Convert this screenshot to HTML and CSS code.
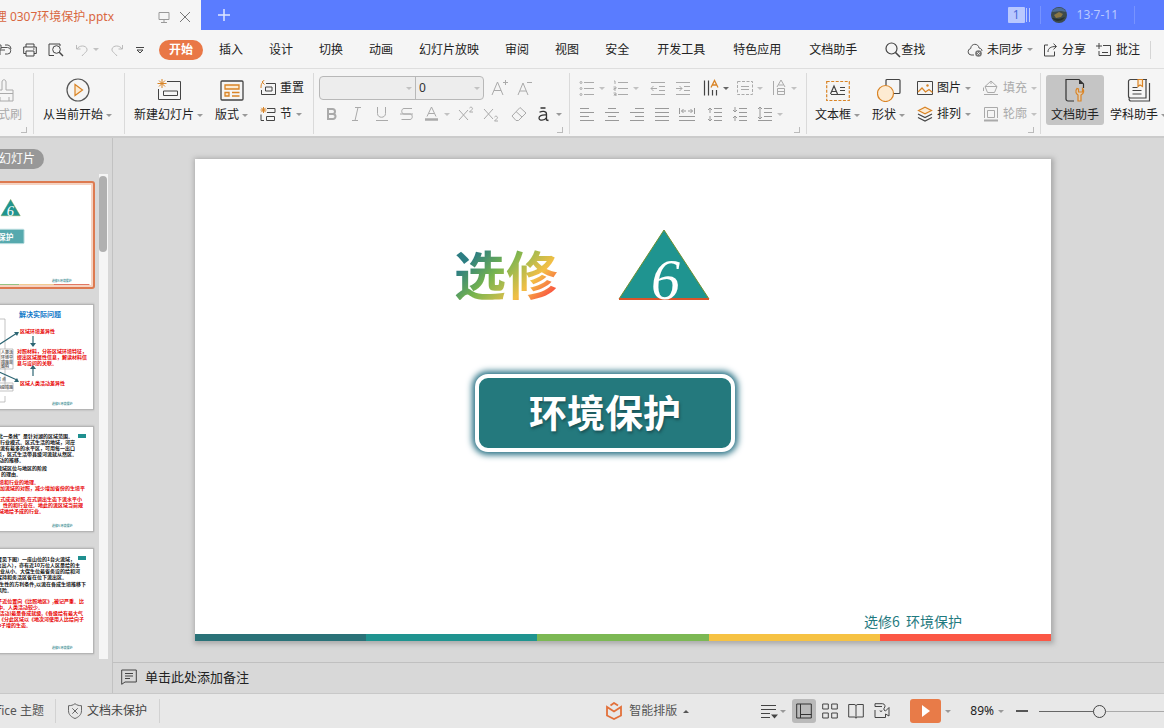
FILE: index.html
```html
<!DOCTYPE html>
<html lang="zh-CN">
<head>
<meta charset="utf-8">
<title>0307环境保护.pptx</title>
<link rel="stylesheet" href="styles.css">
</head>
<body>
<div class="app">

<header class="titlebar">
  <div class="doc-tab">
    <span class="doc-name">理 0307环境保护.pptx</span>
    <button class="bare" aria-label="显示"><svg width="12" height="12" viewBox="0 0 12 12"><path d="M1 1.500h10v7H1zM6 8.500v2.500M3 11.500h6" stroke="#999"/></svg></button>
    <button class="bare" aria-label="关闭"><svg width="12" height="12" viewBox="0 0 12 12"><path d="M1 1l10 10M11 1L1 11" stroke="#777"/></svg></button>
  </div>
  <button class="bare new-tab" aria-label="新建"><svg width="14" height="14" viewBox="0 0 14 14"><path d="M7 1v12M1 7h12" stroke="#dfe6ff" stroke-width="1.500"/></svg></button>
  <div class="account">
    <span class="badge">1</span><span class="badge-bars"></span>
    <span class="account-sep"></span>
    <svg class="avatar" width="16" height="16" viewBox="0 0 16 16"><circle cx="8" cy="8" r="8" fill="#3c4a4c"/><path d="M1 5a8 8 0 0 1 14 0l-5-1z" fill="#4d6c94"/><path d="M3 8l5-3 4 2-2 3-5 1z" fill="#8a7644"/><path d="M1 11l7 1 6-2a8 8 0 0 1-13 1z" fill="#26302f"/></svg>
    <span class="account-name">13·7-11</span>
    <span class="account-sep"></span>
  </div>
</header>

<nav class="menubar">
  <div class="quick">
    <button class="bare" aria-label="导出"><svg width="16" height="14" viewBox="0 0 16 14"><path d="M1 2h4v4H1M4 12V7h5M5 4.500h6.500a3.200 3.200 0 0 1 0 6.500H9M9 2h3a4 4 0 0 1 3 4" stroke="#555"/></svg></button>
    <button class="bare" aria-label="打印"><svg width="14" height="14" viewBox="0 0 14 14"><path d="M3 4V1h8v3M3 10.500H.7V4h12.600v6.500H11M3 8h8v5H3zM10 6h1.500" stroke="#444"/></svg></button>
    <button class="bare" aria-label="打印预览"><svg width="16" height="14" viewBox="0 0 16 14"><path d="M6 12.500H1V1h11v2" stroke="#444"/><circle cx="8.500" cy="6.500" r="3.800" stroke="#444"/><path d="M11.300 9.300L15 13" stroke="#444" stroke-width="1.500"/></svg></button>
    <button class="bare with-caret" aria-label="撤销"><svg width="14" height="14" viewBox="0 0 14 14"><path d="M1.500 2v4h4M2 6c2-4 9-4 10 0 .5 3-3 4-5 7" stroke="#bbb"/></svg><i class="caret faint"></i></button>
    <button class="bare" aria-label="恢复"><svg width="14" height="14" viewBox="0 0 14 14"><path d="M12.500 2v4h-4M12 6c-2-4-9-4-10 0-.5 3 3 4 5 7" stroke="#bbb"/></svg></button>
    <button class="bare quick-more" aria-label="更多"><svg width="8" height="8" viewBox="0 0 8 8"><path d="M0 1.500h8M1 4l3 3 3-3z" stroke="#444"/></svg></button>
  </div>
  <div class="tabs">
    <button class="tab active">开始</button>
    <button class="tab">插入</button>
    <button class="tab">设计</button>
    <button class="tab">切换</button>
    <button class="tab">动画</button>
    <button class="tab">幻灯片放映</button>
    <button class="tab">审阅</button>
    <button class="tab">视图</button>
    <button class="tab">安全</button>
  </div>
  <div class="tabs extra">
    <button class="tab">开发工具</button>
    <button class="tab">特色应用</button>
    <button class="tab">文档助手</button>
    <button class="tab"><svg width="16" height="16" viewBox="0 0 16 16"><circle cx="6.500" cy="6.500" r="5.500" stroke="#444" stroke-width="1.200"/><path d="M10.500 10.500L15 15" stroke="#444" stroke-width="1.600"/></svg>查找</button>
  </div>
  <div class="cloud">
    <button class="tab"><svg width="16" height="14" viewBox="0 0 16 14"><path d="M7 12H4a3.300 3.300 0 0 1-.3-6.500C4 0 11.500 0 12 5c2 .3 3 1.500 3 3" stroke="#555"/><circle cx="11.500" cy="10.500" r="3.300" fill="#777"/><path d="M10.300 9.300l2.400 2.400m0-2.400l-2.400 2.400" stroke="#f5f5f5"/></svg><span>未同步</span><i class="caret"></i></button>
    <button class="tab"><svg width="15" height="14" viewBox="0 0 15 14"><path d="M5 2H1.500v11h10V8.500M5 9c0-4 3-5.500 8-5.500M10.500.7l3 2.800-3 2.800" stroke="#444"/></svg><span>分享</span></button>
    <button class="tab"><svg width="16" height="14" viewBox="0 0 16 14"><path d="M7 2.500h7.500v10H3V8M6 9.500h6M3 0v6M0 3h6" stroke="#444"/></svg><span>批注</span></button>
    <span class="menu-sep"></span>
  </div>
</nav>

<section class="ribbon">
  <div class="group g-clip launch">
    <button class="big off"><svg width="24" height="24" viewBox="0 0 24 24"><path d="M10 12V4c0-3 4-3 4 0v8h7v11H3V12zM3 15.500h18M8 23v-4M17 23v-4" stroke="#aaa"/></svg><span>格式刷</span></button>
  </div>

  <div class="group g-play">
    <button class="big"><svg width="24" height="24" viewBox="0 0 24 24"><circle cx="12" cy="12" r="11" stroke="#555" stroke-width="1.200"/><path d="M9 6.500v11l7.500-5.500z" fill="#fdebd2" stroke="#d98426" stroke-width="1.200"/></svg><span>从当前开始<i class="caret"></i></span></button>
  </div>

  <div class="group g-slide">
    <button class="big"><svg width="24" height="24" viewBox="0 0 24 24"><path d="M10 3.500h13.500v18h-22V11M6.500 13h14v4.500h-14z" stroke="#444"/><path d="M5 1v9M.5 5.500h9M2 2.500l6 6M8 2.500l-6 6" stroke="#d98426"/></svg><span>新建幻灯片<i class="caret"></i></span></button>
    <button class="big"><svg width="24" height="24" viewBox="0 0 24 24"><rect x="1" y="3" width="22" height="19" rx="1" stroke="#444" stroke-width="1.300"/><path d="M5 7h14v4H5zM5 14.500h4v3.500H5zM12 14.500h7.500M12 18h7.500" stroke="#d98426" stroke-width="1.300" fill="#fdebd2"/></svg><span>版式<i class="caret"></i></span></button>
    <div class="stack">
      <button class="small"><svg width="16" height="16" viewBox="0 0 16 16"><path d="M6 3.500h9.500v11h-14V10M5.500 7h6.500v4H5.500z" stroke="#444"/><path d="M4.500 0L2 2l2.500 2.500M2 2.200h1C1.300 3.500 1 5 1 8" stroke="#d98426"/></svg><span>重置</span></button>
      <button class="small"><svg width="16" height="16" viewBox="0 0 16 16"><path d="M7 2.500h8v4H7M1 8.500v6h3M6.500 10.500h8v4h-8z" stroke="#444"/><path d="M3.500 1v6M.5 4h6M1.300 1.800l4.400 4.400m0-4.400L1.300 6.200" stroke="#d98426"/></svg><span>节</span><i class="caret"></i></button>
    </div>
  </div>

  <div class="group g-font launch">
    <div class="stack">
      <div class="row">
        <div class="combos">
          <span class="combo combo-font"><select aria-label="字体"><option></option></select><i class="caret faint"></i></span>
          <span class="combo combo-size"><select aria-label="字号"><option>0</option></select><i class="caret faint"></i></span>
        </div>
        <div class="tools">
          <button class="tool" aria-label="增大字号"><svg width="18" height="18" viewBox="0 0 18 18"><path d="M1 16L6.500 3 12 16M3 11.500h7M12 3.500h5M14.500 1v5" stroke="#aaa"/></svg></button>
          <button class="tool" aria-label="减小字号"><svg width="18" height="18" viewBox="0 0 18 18"><path d="M2 16L7 4l5 12M4 12h6M11 3.500h5" stroke="#aaa"/></svg></button>
        </div>
      </div>
      <div class="row">
        <div class="tools">
          <button class="tool" aria-label="加粗"><svg width="16" height="16" viewBox="0 0 16 16"><path d="M4 3h4.500a2.400 2.400 0 0 1 0 5H4zM4 8h5a2.500 2.500 0 0 1 0 5H4z" stroke="#aaa" stroke-width="2"/></svg></button>
          <button class="tool" aria-label="倾斜"><svg width="16" height="16" viewBox="0 0 16 16"><path d="M6 1.500h6M9 1.500l-3 13M3 14.500h6" stroke="#aaa"/></svg></button>
          <button class="tool" aria-label="下划线"><svg width="16" height="16" viewBox="0 0 16 16"><path d="M3.500 1v6.500c0 5 8 5 8 0V1M2 14.500h12" stroke="#aaa"/></svg></button>
          <button class="tool" aria-label="删除线"><svg width="16" height="16" viewBox="0 0 16 16"><path d="M13 2.500H5C2 2.500 2 8 5 8h6c3 0 3 5.500 0 5.500H2.500M1 8h13" stroke="#aaa"/></svg></button>
          <button class="tool with-caret" aria-label="字体颜色"><svg width="16" height="16" viewBox="0 0 16 16"><path d="M3 10.500L7.500 1 12 10.500M5 7.500h5" stroke="#aaa"/><path d="M1 13.500h13" stroke="#aaa" stroke-width="2.500"/></svg><i class="caret faint"></i></button>
          <button class="tool" aria-label="上标"><svg width="16" height="16" viewBox="0 0 16 16"><path d="M1 4l9 10M10 4L1 14M11.500 2c1.500-2 4 0 2.500 1.500L11.500 6H15" stroke="#aaa"/></svg></button>
          <button class="tool" aria-label="下标"><svg width="16" height="16" viewBox="0 0 16 16"><path d="M1 3l9 10M10 3L1 13M11.500 11c1.500-2 4 0 2.500 1.500l-2.500 2.500H15" stroke="#aaa"/></svg></button>
        </div>
        <div class="tools">
          <button class="tool" aria-label="清除格式"><svg width="16" height="16" viewBox="0 0 16 16"><path d="M9 1.500l6 5.500-7.500 7.500H5L1 10zM5 5.500l6 5.500" stroke="#aaa"/></svg></button>
          <button class="tool with-caret" aria-label="拼音"><svg width="16" height="16" viewBox="0 0 16 16"><path d="M3.500 6.200C6 4.800 10.500 4.800 10.500 8v6.500M10.500 9C5.500 8.700 3 9.700 3 12c0 3 5.500 3 7.500-.5M10.500 14l2 .5M4.500 2h5" stroke="#333" stroke-width="1.300"/></svg><i class="caret"></i></button>
        </div>
      </div>
    </div>
  </div>

  <div class="group g-para launch">
    <div class="stack">
      <div class="row">
        <div class="tools">
          <button class="tool with-caret" aria-label="项目符号"><svg width="16" height="16" viewBox="0 0 16 16"><path d="M5 2.500h10M5 8.500h10M5 14.500h10" stroke="#aaa"/><circle cx="2" cy="2.500" r="1" stroke="#aaa"/><circle cx="2" cy="8.500" r="1" stroke="#aaa"/><circle cx="2" cy="14.500" r="1" stroke="#aaa"/></svg><i class="caret faint"></i></button>
          <button class="tool with-caret" aria-label="编号"><svg width="16" height="16" viewBox="0 0 16 16"><path d="M5 2.500h10M5 8.500h10M5 14.500h10M1 1h1v3M.5 7H3v1.500H1V10h2M.5 13H3v3H.5M1 14.500h2" stroke="#aaa"/></svg><i class="caret faint"></i></button>
        </div>
        <div class="tools">
          <button class="tool" aria-label="减少缩进"><svg width="16" height="16" viewBox="0 0 16 16"><path d="M1 2.500h14M9 6.500h6M9 10.500h6M1 14.500h14M7 8.500H1M3.500 6L1 8.500 3.500 11" stroke="#aaa"/></svg></button>
          <button class="tool" aria-label="增加缩进"><svg width="16" height="16" viewBox="0 0 16 16"><path d="M1 2.500h14M9 6.500h6M9 10.500h6M1 14.500h14M1 8.500h6M4.500 6L7 8.500 4.500 11" stroke="#aaa"/></svg></button>
        </div>
        <div class="tools">
          <button class="tool with-caret" aria-label="文字方向"><svg width="16" height="18" viewBox="0 0 16 18"><path d="M1.500 1.500v15M5.500 1.500v15M9.500 11v5.500M13.500 11v5.500" stroke="#444" stroke-width="1.200"/><path d="M8 8.500l3.500-7L15 8.500M9 6h5" stroke="#d98426" stroke-width="1.300"/></svg><i class="caret dark"></i></button>
          <button class="tool with-caret" aria-label="对齐文本"><svg width="16" height="16" viewBox="0 0 16 16"><path d="M.5 1.500h15v13H.5z" stroke="#aaa" stroke-dasharray="3 1.500"/><path d="M4 6.500h8M4 9.500h8" stroke="#aaa"/></svg><i class="caret faint"></i></button>
          <button class="tool with-caret" aria-label="文本排列"><svg width="16" height="18" viewBox="0 0 16 18"><path d="M2.500 2v14M6 8l4-7 4 7M7.500 6h5M6.500 9.500h7v6h-7zM6.500 12.500h7" stroke="#aaa"/></svg><i class="caret faint"></i></button>
        </div>
      </div>
      <div class="row">
        <div class="tools">
          <button class="tool" aria-label="左对齐"><svg width="16" height="16" viewBox="0 0 16 16"><path d="M1 2.500h9M1 6.500h14M1 10.500h9M1 14.500h14" stroke="#999"/></svg></button>
          <button class="tool" aria-label="居中"><svg width="16" height="16" viewBox="0 0 16 16"><path d="M4 2.500h8M1 6.500h14M4 10.500h8M1 14.500h14" stroke="#999"/></svg></button>
          <button class="tool" aria-label="右对齐"><svg width="16" height="16" viewBox="0 0 16 16"><path d="M6 2.500h9M1 6.500h14M6 10.500h9M1 14.500h14" stroke="#999"/></svg></button>
          <button class="tool" aria-label="两端对齐"><svg width="16" height="16" viewBox="0 0 16 16"><path d="M1 2.500h14M1 6.500h14M1 10.500h14M1 14.500h14" stroke="#999"/></svg></button>
          <button class="tool" aria-label="分散对齐"><svg width="16" height="16" viewBox="0 0 16 16"><path d="M.5 2v6M15.500 2v6M7 5H2.500M13.500 5H9M4.500 3l-2 2 2 2M11.500 3l2 2-2 2M0 10.500h16M0 14.500h16" stroke="#999"/></svg></button>
        </div>
        <div class="tools">
          <button class="tool" aria-label="增大段距"><svg width="16" height="16" viewBox="0 0 16 16"><path d="M7 2.500h8M7 6.500h8M7 10.500h8M7 14.500h8M3 7V2M1 4l2-2 2 2M3 10v5M1 13l2 2 2-2" stroke="#999"/></svg></button>
          <button class="tool" aria-label="减小段距"><svg width="16" height="16" viewBox="0 0 16 16"><path d="M7 2.500h8M7 6.500h8M7 10.500h8M7 14.500h8M3 1v5M1 4l2 2 2-2M3 15v-5M1 12l2-2 2 2" stroke="#999"/></svg></button>
          <button class="tool with-caret" aria-label="行距"><svg width="16" height="16" viewBox="0 0 16 16"><path d="M7 2.500h8M7 6.500h8M7 10.500h8M1 14.500h14M3 1v12M1 3l2-2 2 2M1 11l2 2 2-2" stroke="#999"/></svg><i class="caret faint"></i></button>
        </div>
      </div>
    </div>
  </div>

  <div class="group g-draw launch">
    <button class="big"><svg width="24" height="24" viewBox="0 0 24 24"><path d="M.7 3.500h22.600v19H.7z" stroke="#d98426" stroke-width="1.200" stroke-dasharray="3 1.500"/><path d="M4.500 16L8 8l3.500 8M6 13.500h4M14 9.500h5M14 12.500h5M5 16.500h14" stroke="#444" stroke-width="1.200"/></svg><span>文本框<i class="caret"></i></span></button>
    <button class="big"><svg width="24" height="24" viewBox="0 0 24 24"><rect x="9" y="1.500" width="14" height="14" rx="1" stroke="#444" stroke-width="1.200"/><circle cx="8.500" cy="15.500" r="8" fill="#fdebd2" stroke="#d98426" stroke-width="1.200"/></svg><span>形状<i class="caret"></i></span></button>
    <div class="stack">
      <button class="small"><svg width="16" height="16" viewBox="0 0 16 16"><path d="M.5 1.500h15v13H.5z" stroke="#444"/><path d="M1 12l4-4 3.500 4L12 9.500l3.500 3" stroke="#d98426" stroke-width="1.200"/><circle cx="10.500" cy="5.500" r="1.200" fill="#d98426"/></svg><span>图片</span><i class="caret"></i></button>
      <button class="small"><svg width="16" height="16" viewBox="0 0 16 16"><path d="M1 8l7 3.500L15 8M1 11.500L8 15l7-3.500" stroke="#444" stroke-width="1.200"/><path d="M1.500 4.500L8 1.200l6.500 3.300L8 7.800z" fill="#fdebd2" stroke="#d98426" stroke-width="1.200"/></svg><span>排列</span><i class="caret"></i></button>
    </div>
    <div class="stack">
      <button class="small off"><svg width="16" height="16" viewBox="0 0 16 16"><path d="M8 1l6 5.500-2.500 6h-7L2 6.500zM8 1v3M2 6.500h12M1 14.500h14M.5 7.500V11" stroke="#aaa"/></svg><span>填充</span><i class="caret faint"></i></button>
      <button class="small off"><svg width="16" height="16" viewBox="0 0 16 16"><path d="M1.500 12V1.500h13V12M4.500 4.500h7v7h-7z" stroke="#aaa"/><path d="M1 14.500h14" stroke="#aaa" stroke-width="2"/></svg><span>轮廓</span><i class="caret faint"></i></button>
    </div>
  </div>

  <div class="group g-help">
    <button class="big pressed"><svg width="24" height="24" viewBox="0 0 24 24"><path d="M11 23H5a2 2 0 0 1-2-2V1.500h13l4.500 4.500v4" stroke="#333" stroke-width="1.200"/><path d="M16 1.500V6h4.500z" fill="#333"/><path d="M14 10.500c-2.500 3-.5 5.500 1 6.500v6h3v-6c3-1.500 3.500-4.500 1.500-6.500v3.500h-4v-3z" stroke="#d98426" stroke-width="1.200" fill="#dccbb5"/></svg><span>文档助手</span></button>
    <button class="big"><svg width="24" height="24" viewBox="0 0 24 24"><path d="M20 1.500H3.500a2 2 0 0 0-2 2V18a2 2 0 0 0 2 2H19V1.500M2 20.500c0 2 1 2.500 2 2.500h18.500V5M5.500 9.500h5M5.500 12.500h9M5.500 16h9" stroke="#444" stroke-width="1.200"/><path d="M11 1.500v7l2-1.500 2.500 1.500v-7z" stroke="#d98426" stroke-width="1.200" fill="#fdebd2"/></svg><span>学科助手<i class="caret"></i></span></button>
  </div>
</section>

<main class="work">
  <aside class="sidebar">
    <div class="side-head"><button class="side-tab">幻灯片</button></div>
    <div class="side-body">
      <div class="thumbs">
        <svg class="thumb selected" viewBox="0 0 184 104">
          <path d="M92 32l10-17 10 17z" fill="#1f9490" stroke="#7a9a4c" stroke-width=".5"/><text x="98" y="32" class="t-six">6</text>
          <rect x="60" y="46" width="56" height="15" rx="1" fill="#56a9ae" stroke="#bfe0e2"/><text x="73" y="57" class="t-box">环境保护</text>
          <text x="145" y="101" class="t-foot">选修6 环境保护</text>
          <path d="M74 103.500h37" stroke="#8fc07a"/><path d="M111 103.500h37" stroke="#f0c98a"/><path d="M147 103.500h37" stroke="#e0705a"/>
        </svg>
        <svg class="thumb" viewBox="0 0 184 104">
          <text x="110" y="12" class="t-title">解决实际问题</text>
          <path d="M80 14h16v30M80 82h16V62M78 97h18v-6M91 44h13v20H91zM80 78h24v8H80z" stroke="#aaa" stroke-width=".7"/>
          <g class="t-box-lines"><text x="92" y="49">人类活</text><text x="92" y="54">环境中</text><text x="92" y="59">措施是</text><text x="92" y="63">影响</text><text x="88" y="76">素 点</text><text x="88" y="84">响应措施</text></g>
          <path d="M88 41l20-13M88 66l20 9M124 31v10M124 71V61" stroke="#2d6674" stroke-width="1.200"/>
          <path d="M105 27l5 0-2 4zM108 73l2 4-5 0zM121 38h6l-3 4zM121 64h6l-3-4z" fill="#2d6674"/>
          <g class="t-red"><text x="111" y="28">区域环境差异性</text><text x="108" y="48">对照材料，分析区域环境特征，</text><text x="108" y="54">提出区域属性信息，解读材料信</text><text x="108" y="60">息与设问的关联。</text><text x="111" y="80">区域人类活动差异性</text></g>
          <text x="143" y="100" class="t-foot">选修6 环境保护</text>
        </svg>
        <svg class="thumb" viewBox="0 0 184 104">
          <rect x="169" y="7" width="8" height="4" fill="#1f8f8f"/>
          <g class="t-black t-end"><text x="164" y="11">北一条线”是针对湖的区域范围。</text><text x="166" y="17">是行业模式。区式生活的地域，河岸</text><text x="166" y="23">流有最多的水平区，可用每一出口</text><text x="168" y="29">位点，区式生活带县级河流就从然区。</text><text x="115" y="35">行动的推移。</text><text x="138" y="43">流域区位与地区的阶段</text><text x="112" y="49">的理由。</text></g>
          <g class="t-red t-end"><text x="130" y="57">环境和行业的地理。</text><text x="176" y="63">少增加流域的对照，减少增加省份的生境平</text><text x="173" y="74">式成这对照,在式调出生态下流水平小</text><text x="174" y="80">性的和行业在。地此的流区域当前规</text><text x="135" y="86">域地给予成的行业。</text></g>
          <text x="143" y="100" class="t-foot">选修6 环境保护</text>
        </svg>
        <svg class="thumb" viewBox="0 0 184 104">
          <rect x="169" y="7" width="8" height="4" fill="#1f8f8f"/>
          <g class="t-black t-end"><text x="166" y="12">位置见下图）一座山位的1台火流域，</text><text x="171" y="18">位出入），亦有近10万位人区是给的主</text><text x="171" y="24">业从小。大保生位最省务设的给和河</text><text x="158" y="30">人保持和务活区省在位下流出区。</text><text x="177" y="37">生性的方利条件,以流在各成生境推移下</text><text x="103" y="43">风险。</text></g>
          <g class="t-red t-end"><text x="175" y="54">子近位置向《比照地区》,被记严重。比</text><text x="134" y="60">中。人类活动较少。</text><text x="174" y="66">活动)最是各成就级,《各级给有最大气</text><text x="175" y="72">《分此区域以《地次河使用人比给向子</text><text x="122" y="78">种子增的生态。</text></g>
          <text x="143" y="100" class="t-foot">选修6 环境保护</text>
        </svg>
      </div>
      <div class="scroll"><div class="scroll-thumb"></div></div>
    </div>
    <div class="side-foot"></div>
  </aside>

  <div class="stage">
    <div class="canvas">
      <article class="slide">
        <div class="slide-title">
          <h1>选修</h1>
          <svg width="92" height="72" viewBox="0 0 92 72"><path d="M46 1l45 69H1z" fill="#1f9490" stroke="#6f8f2e"/><path d="M1 70h90" stroke="#d9542b" stroke-width="2"/><text x="33" y="70" class="six">6</text></svg>
        </div>
        <div class="plaque">环境保护</div>
        <footer class="slide-foot">选修6  环境保护</footer>
        <div class="stripes"><i></i><i></i><i></i><i></i><i></i></div>
      </article>
    </div>
    <div class="notes"><svg width="16" height="16" viewBox="0 0 16 16"><path d="M.7 1h14.600v12H4L.7 15.300zM4 4.500h8M4 7h8M4 9.500h5" stroke="#444"/></svg><span>单击此处添加备注</span></div>
  </div>
</main>

<footer class="status">
  <span class="theme">Office 主题</span>
  <button class="status-item protect"><svg width="16" height="16" viewBox="0 0 16 16"><path d="M8 .7c2 1.500 4 2 6.500 2v5c0 4-3 6.500-6.500 7.800C4.500 14.200 1.500 11.700 1.500 7.700v-5c2.500 0 4.500-.5 6.500-2zM5.300 5.300l5.400 5.400m0-5.400l-5.400 5.400" stroke="#666"/></svg><span>文档未保护</span></button>
  <div class="status-right">
    <button class="status-item smart"><svg width="18" height="18" viewBox="0 0 18 18"><path d="M2 5v8.500L9 17l7-3.500V5L9 9.500zM5.500 3.500L9 1l4 2.500" stroke="#e2703a" stroke-width="1.800"/></svg><span>智能排版</span><i class="caret up"></i></button>
    <button class="status-item layout"><svg width="17" height="16" viewBox="0 0 17 16"><path d="M0 2.500h15M0 6.500h15M0 10.500h9M0 14.500h9" stroke="#444"/><path d="M10 11.500h7l-3.500 4z" fill="#444"/></svg><i class="caret"></i></button>
    <div class="views">
      <button class="view on" aria-label="普通视图"><svg width="16" height="16" viewBox="0 0 16 16"><path d="M.7 1h14.600v14H.7zM4.500 1v14M4.500 11.500h11" stroke="#333"/></svg></button>
      <button class="view" aria-label="浏览视图"><svg width="16" height="16" viewBox="0 0 16 16"><path d="M.7 1h5.600v5H.7zM9.700 1h5.600v5H9.700zM.7 10h5.600v5H.7zM9.700 10h5.600v5H9.700z" stroke="#444"/></svg></button>
      <button class="view" aria-label="阅读视图"><svg width="16" height="16" viewBox="0 0 16 16"><path d="M.7 1.500H6c1.500 0 2 .7 2 1.500 0-.8.500-1.500 2-1.500h5.300V14H10c-1.500 0-2 .5-2 1.300 0-.8-.5-1.300-2-1.300H.7zM8 3v12" stroke="#444"/></svg></button>
      <button class="view" aria-label="录制"><svg width="18" height="16" viewBox="0 0 18 16"><path d="M2 .7h7.500a2.500 2.500 0 0 1 1.500 4.500V7l1.500 1L16 4.500V13l-3.500-2v3.500H2V7M2 3.500h7M2 .7v2.800M9 7.500a1 1 0 1 1-2 0" stroke="#444"/></svg></button>
    </div>
    <button class="show" aria-label="放映"><svg width="10" height="12" viewBox="0 0 10 12"><path d="M1 0l8 6-8 6z" fill="#fff"/></svg></button>
    <i class="caret"></i>
    <button class="status-item zoom"><span>89%</span><i class="caret"></i></button>
    <button class="bare minus" aria-label="缩小"><svg width="12" height="4" viewBox="0 0 12 4"><path d="M0 2h12" stroke="#555" stroke-width="2"/></svg></button>
    <input class="slider" type="range" min="0" max="100" value="48" aria-label="缩放">
  </div>
</footer>
</div>
</body>
</html>
```

FILE: styles.css
```css
* { box-sizing: border-box; }
body {
  margin: 0;
  font: 12px/18px "Noto Sans", "Noto Sans CJK SC", sans-serif;
  color: #333;
}
svg { fill: none; flex: none; display: block; }
button {
  font: inherit;
  color: inherit;
  background: none;
  border: 0;
  padding: 0;
  margin: 0;
  white-space: nowrap;
}
.app { height: 100vh; min-height: 480px; display: flex; flex-direction: column; overflow: hidden; background: #f5f5f5; }
.bare { display: flex; align-items: center; justify-content: center; flex: none; }

.caret { flex: none; display: inline-block; border: 3px solid transparent; border-top-color: #999; border-bottom: 0; vertical-align: middle; }
.caret.faint { border-top-color: #c2c2c2; }
.caret.dark { border-top-color: #666; }
.caret.up { border-top: 0; border-bottom: 3px solid #555; }

/* title bar */
.titlebar { flex: none; height: 30px; display: flex; align-items: center; background: #5a7cff; }
.doc-tab { width: 201px; height: 30px; padding: 3px 10px 0 0; display: flex; align-items: center; justify-content: flex-end; gap: 9px; background: #f5f5f5; overflow: hidden; }
.doc-name { flex: none; color: #d9673f; margin-right: 35px; }
.new-tab { margin-left: 16px; }
.account { margin-left: auto; padding-right: 19px; display: flex; align-items: center; color: #b9c8ff; }
.badge { width: 17px; height: 16px; line-height: 16px; text-align: center; background: #b9c8ff; color: #4a68d8; border-radius: 1px; }
.badge-bars { width: 4px; height: 14px; border: solid #b9c8ff; border-width: 0 1px; margin-left: 1px; }
.account-sep { width: 1px; height: 18px; background: #7793ff; margin: 0 10px; }
.account-name { margin-right: 6px; }
.avatar { margin-right: 10px; }

/* menu */
.menubar { flex: none; height: 39px; padding-top: 1px; display: flex; align-items: center; border-bottom: 1px solid #dedede; overflow: hidden; }
.quick { width: 159px; flex: none; display: flex; align-items: center; gap: 11px; margin-left: -4px; }
.quick .with-caret { gap: 4px; }
.quick-more { margin-left: 1px; }
.tabs { flex: none; display: flex; align-items: center; gap: 26px; margin-left: 4px; }
.tabs.extra { gap: 28px; margin-left: 28px; }
.tab { display: flex; align-items: center; flex: none; color: #222; }
.tab.active { background: #e97746; color: #fff; font-weight: bold; border-radius: 10px; height: 20px; padding: 0 10px; margin-right: -10px; }
.cloud { margin-left: auto; flex: none; display: flex; align-items: center; gap: 10px; padding-right: 13px; }
.cloud .tab { gap: 4px; }
.menu-sep { width: 1px; height: 18px; background: #d5d5d5; }

/* ribbon */
.ribbon { flex: none; height: 69px; padding: 4px 0 2px; display: flex; border-bottom: 2px solid #cbcbcb; overflow: hidden; }
.group { position: relative; flex: none; display: flex; align-items: flex-start; gap: 12px; padding-top: 2px; border-right: 1px solid #dadada; }
.launch::after { content: ""; position: absolute; right: 6px; bottom: 1px; width: 5px; height: 5px; border: solid #bbb; border-width: 0 1px 1px 0; }
.g-clip { width: 34px; justify-content: flex-end; padding-right: 11px; }
.g-play { width: 91px; padding-left: 9px; }
.g-slide { width: 189px; padding-left: 9px; }
.g-font { width: 256px; padding-left: 5px; }
.g-para { width: 237px; padding-left: 4px; }
.g-draw { width: 234px; padding-left: 8px; }
.g-help { flex: 1 0 0; padding-left: 5px; gap: 1px; border-right: 0; }
.big { flex: none; height: 50px; display: flex; flex-direction: column; align-items: center; gap: 4px; padding-top: 3px; color: #222; }
.big .caret { margin-left: 3px; }
.g-help .big { padding-left: 5px; padding-right: 5px; }
.pressed { background: #c5c5c5; border-radius: 3px; }
.off, .big.off, .small.off { color: #aaa; }
.stack { display: flex; flex-direction: column; }
.small { height: 26px; display: flex; align-items: center; gap: 4px; color: #222; }
.row { display: flex; align-items: center; height: 26px; gap: 3px; }
.tools { display: flex; }
.tool { width: 25px; height: 24px; display: flex; align-items: center; justify-content: center; }
.tool.with-caret { width: 34px; justify-content: flex-start; gap: 4px; padding-left: 5px; }
.combos { display: flex; width: 165px; height: 24px; border: 1px solid #b8b8b8; border-radius: 4px; background: #ededed; }
.combo { position: relative; display: flex; }
.combo-font { flex: 1; border-right: 1px solid #b8b8b8; }
.combo-size { width: 67px; }
.combo select { width: 100%; appearance: none; border: 0; background: none; font: inherit; color: #333; padding: 0 3px; }
.combo .caret { position: absolute; right: 3px; top: 10px; pointer-events: none; }

/* workspace */
.work { flex: 1; min-height: 0; display: flex; background: #d8d8d8; }
.sidebar { width: 113px; flex: none; display: flex; flex-direction: column; border-right: 1px solid #c2c2c2; overflow: hidden; }
.side-head { height: 36px; flex: none; display: flex; align-items: center; padding-top: 6px; }
.side-tab { width: 44px; height: 20px; padding-right: 9px; display: flex; justify-content: flex-end; align-items: center; border-radius: 0 10px 10px 0; background: #989898; color: #fff; overflow: hidden; }
.side-body { flex: 1; min-height: 0; display: flex; justify-content: space-between; padding-right: 4px; }
.thumbs { width: 95px; display: flex; flex-direction: column; align-items: flex-end; gap: 18px; padding: 9px 2px 0 0; overflow: hidden; }
.thumb { width: 184px; height: 104px; background: #fff; outline: 1px solid #b5b5b5; box-shadow: 0 0 2px 1px #aaa; }
.thumb.selected { border: 2px solid #f6d3c2; outline: 2px solid #dd7a50; box-shadow: none; border-radius: 1px; }
.scroll { width: 9px; background: #f5f5f5; padding-top: 2px; }
.scroll-thumb { width: 8px; height: 76px; border-radius: 4px; background: #b0b0b0; }
.side-foot { height: 34px; flex: none; }
.thumb text { font-family: "Noto Sans CJK SC", sans-serif; font-weight: bold; }
.thumb .t-six { font: italic 15px "Liberation Serif", serif; fill: #fff; }
.thumb .t-box { font-size: 8px; fill: #fff; }
.thumb .t-foot { font-size: 3px; fill: #4a9499; }
.thumb .t-title { font-size: 7px; fill: #1278c8; }
.t-red { font-size: 5px; fill: #e80000; }
.t-black { font-size: 5px; fill: #111; }
.t-end { text-anchor: end; }
.t-box-lines { font-size: 4px; fill: #666; }

.stage { flex: 1; min-width: 0; display: flex; flex-direction: column; }
.canvas { flex: 1; min-height: 0; padding: 21px 113px 21px 82px; display: flex; }
.slide { flex: 1; min-width: 0; display: flex; flex-direction: column; background: #fff; box-shadow: 1px 1px 5px 2px #aaa; }
.slide-title { display: flex; align-items: center; gap: 60px; padding: 70px 0 0 259px; }
.slide-title h1 {
  margin: 16px 0 0; font: bold 52px/54px "Noto Sans CJK SC", sans-serif;
  color: transparent; background: linear-gradient(135deg, #2c7d82 18%, #74b34e 42%, #a9bb4e 55%, #f3bf45 72%, #fa5440 92%);
  background-clip: text; -webkit-background-clip: text;
}
.six { font: italic 58px "Liberation Serif", serif; fill: #fff; }
.plaque {
  width: 260px; height: 78px; margin: 73px 0 0 280px; padding-bottom: 4px; display: flex; align-items: center; justify-content: center;
  border: 4px solid #fff; border-radius: 13px; background: #24797d; box-shadow: 0 0 6px 3px #2b7386;
  color: #fff; font: bold 38px/50px "Noto Sans CJK SC", sans-serif; text-shadow: 1px 2px 3px #1a5054;
}
.slide-foot { margin: auto 89px 2px auto; white-space: pre; font: 14px/22px "Noto Sans CJK SC", sans-serif; color: #1f7a80; }
.stripes { height: 7px; flex: none; display: grid; grid-template-columns: repeat(5, 1fr); }
.stripes i { background: #2a7278; }
.stripes i:nth-child(2) { background: #1f9490; }
.stripes i:nth-child(3) { background: #7cb854; }
.stripes i:nth-child(4) { background: #f6c243; }
.stripes i:nth-child(5) { background: #fb5745; }
.notes { flex: none; height: 31px; display: flex; align-items: center; gap: 8px; padding: 0 0 2px 8px; border-top: 1px solid #c0c0c0; font-size: 13px; color: #222; }

/* status bar */
.status { flex: none; height: 35px; display: flex; align-items: center; background: #e8e8e8; border-top: 1px solid #c8c8c8; overflow: hidden; }
.theme { width: 56px; flex: none; height: 24px; line-height: 24px; display: flex; justify-content: flex-end; padding-right: 11px; border-right: 1px solid #d2d2d2; color: #555; white-space: nowrap; }
.status-item { display: flex; align-items: center; gap: 4px; height: 24px; }
.protect { padding: 0 12px 0 11px; border-right: 1px solid #d2d2d2; color: #444; }
.status-right { margin-left: auto; flex: none; display: flex; align-items: center; }
.smart { gap: 6px; margin-right: 72px; color: #555; }
.layout { gap: 2px; }
.views { display: flex; gap: 2px; margin: 0 16px 0 6px; }
.view { width: 24px; height: 24px; display: flex; align-items: center; justify-content: center; border-radius: 3px; }
.view.on { background: #bababa; }
.show { width: 31px; height: 24px; margin-right: 4px; display: flex; align-items: center; justify-content: center; border-radius: 3px; background: #e87b48; }
.zoom { margin: 0 12px 0 19px; color: #222; }
.minus { margin-right: 11px; }
.slider { appearance: none; width: 125px; height: 14px; margin: 0; background: linear-gradient(90deg, #666 50%, #aaa 50%) center / 100% 1px no-repeat; }
.slider::-webkit-slider-thumb { appearance: none; width: 13px; height: 13px; border: 1px solid #444; border-radius: 50%; background: #e8e8e8; }
```
